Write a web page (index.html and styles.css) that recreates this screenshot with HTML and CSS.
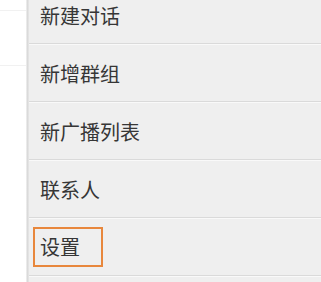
FILE: index.html
```html
<!DOCTYPE html>
<html lang="zh">
<head>
<meta charset="utf-8">
<link rel="stylesheet" href="styles.css">
</head>
<body>
<div class="screen">
  <div class="backdrop">
    <div class="bg-line first"></div>
    <div class="bg-line"></div>
  </div>
  <div class="edge"></div>
  <ul class="menu">
    <li class="item">新建对话</li>
    <li class="item">新增群组</li>
    <li class="item">新广播列表</li>
    <li class="item">联系人</li>
    <li class="item"><span class="highlight">设置</span></li>
    <li class="item"></li>
  </ul>
</div>
</body>
</html>
```
FILE: styles.css
```css
html, body {
  margin: 0;
  padding: 0;
  background: #ffffff;
}
.screen {
  width: 321px;
  height: 282px;
  display: flex;
  overflow: hidden;
  font-family: "Noto Sans CJK SC", "Noto Sans", sans-serif;
}
.backdrop {
  width: 26px;
  flex: none;
  background: #ffffff;
  display: flex;
  flex-direction: column;
}
.bg-line {
  height: 1px;
  background: #f1f1f1;
  margin-top: 54px;
}
.bg-line.first {
  margin-top: 10px;
}
.edge {
  width: 3px;
  flex: none;
  background: linear-gradient(to right, #f3f3f3, #dadada, #e8e8e8);
}
.menu {
  list-style: none;
  margin: -13px 0 0 0;
  padding: 0;
  flex: 1;
  background: #efefef;
  display: flex;
  flex-direction: column;
}
.item {
  height: 56px;
  flex: none;
  display: flex;
  align-items: center;
  padding-left: 11px;
  font-size: 20px;
  color: #363636;
  border-bottom: 1px solid #dadada;
  box-shadow: 0 1px 0 #f9f9f9;
  margin-bottom: 1px;
}
.highlight {
  display: inline-block;
  border: 2px solid #e8873c;
  padding: 7px 21px 7px 5px;
  margin-left: -7px;
  line-height: 22px;
}
```
